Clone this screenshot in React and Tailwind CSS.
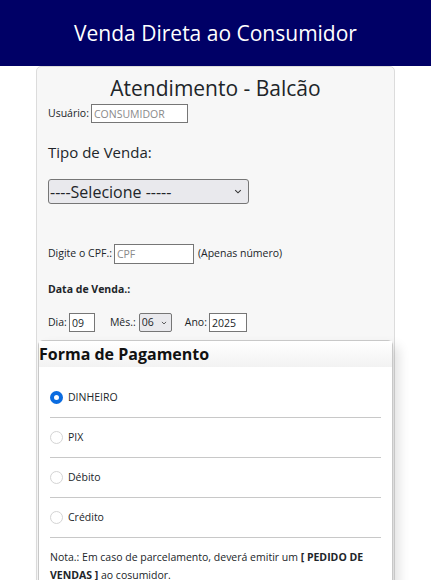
function Chevron({ className }) {
  return (
    <svg viewBox="0 0 10 6" className={className} fill="none" stroke="#333" strokeWidth="1.3">
      <path d="M1.5 1.2 L5 4.6 L8.5 1.2" />
    </svg>
  );
}

export default function App() {
  const formas = ["DINHEIRO", "PIX", "Débito", "Crédito"];

  return (
    <div className="min-h-[580px] bg-white text-[#212529]" style={{ fontFamily: '"Open Sans", "Noto Sans", sans-serif' }}>
      <header className="h-[66px] bg-[#000066] flex items-center justify-center">
        <h1 className="text-white text-[21px] leading-none">Venda Direta ao Consumidor</h1>
      </header>

      <div className="mx-[36px] w-[359px] border border-[#dcdcdc] rounded-[5px] bg-[#f7f7f7]">
        <h2 className="text-center text-[21px] leading-[26px] mt-[8px]">Atendimento - Balcão</h2>

        <div className="px-[11px]">
          <div className="flex items-center gap-[2px] text-[10.5px] mt-[3px]">
            <span>Usuário:</span>
            <input
              readOnly
              placeholder="CONSUMIDOR"
              className="w-[97px] h-[19px] bg-white border border-[#767676] px-[2px] text-[10.5px] placeholder:text-[#8a8a8a]"
            />
          </div>

          <p className="text-[15px] mt-[18px]">Tipo de Venda:</p>

          <div className="relative mt-[15px] w-[201px] h-[25px]">
            <select className="appearance-none w-full h-full bg-[#e9e9ed] border border-[#767676] rounded-[3px] text-[16px] px-[1px]">
              <option>----Selecione -----</option>
            </select>
            <Chevron className="absolute right-[7px] top-[10px] w-[8px] h-[5px] pointer-events-none" />
          </div>

          <div className="flex items-center gap-[2px] text-[10.5px] mt-[40px]">
            <span>Digite o CPF.:</span>
            <input
              readOnly
              placeholder="CPF"
              className="w-[80px] h-[20px] bg-white border border-[#767676] px-[2px] text-[10.5px] placeholder:text-[#8a8a8a]"
            />
            <span className="ml-[2px]">(Apenas número)</span>
          </div>

          <p className="text-[10.5px] font-bold mt-[18px]">Data de Venda.:</p>

          <div className="flex items-center text-[10.5px] mt-[16px] pb-[8px]">
            <span>Dia:</span>
            <input
              readOnly
              value="09"
              className="ml-[2px] w-[26px] h-[19px] bg-white border border-[#767676] px-[2px] text-[10.5px]"
            />
            <span className="ml-[15px]">Mês.:</span>
            <div className="relative ml-[3px] w-[33px] h-[19px]">
              <select className="appearance-none w-full h-full bg-[#e9e9ed] border border-[#767676] rounded-[2px] text-[10.5px] px-[2px]">
                <option>06</option>
              </select>
              <Chevron className="absolute right-[5px] top-[8px] w-[6px] h-[4px] pointer-events-none" />
            </div>
            <span className="ml-[13px]">Ano:</span>
            <input
              readOnly
              value="2025"
              className="ml-[2px] w-[38px] h-[19px] bg-white border border-[#767676] px-[2px] text-[10.5px]"
            />
          </div>
        </div>

        <div className="mx-[1px] border border-[#c8c8c8] rounded-t-[5px] bg-white shadow-[6px_6px_12px_rgba(0,0,0,0.12)]">
          <div className="h-[26px] bg-gradient-to-b from-[#ffffff] to-[#f2f2f2] flex items-center">
            <h3 className="text-[16px] font-bold leading-none text-[#111]">Forma de Pagamento</h3>
          </div>
          <ul className="px-[11px] mt-[11px]">
            {formas.map((f, i) => (
              <li key={f} className="h-[40px] flex items-center gap-[5px] border-b border-[#c8c8c8] text-[10.5px]">
                <input
                  type="radio"
                  name="forma"
                  defaultChecked={i === 0}
                  className="appearance-none w-[13px] h-[13px] rounded-full border border-[#d4d4d4] bg-white checked:border-[4px] checked:border-[#0b6ce0]"
                />
                <span>{f}</span>
              </li>
            ))}
          </ul>
          <p className="px-[11px] pt-[10px] text-[10.5px] leading-[18px]">
            Nota.: Em caso de parcelamento, deverá emitir um <b>[ PEDIDO DE VENDAS ]</b> ao cosumidor.
          </p>
        </div>
      </div>
    </div>
  );
}
